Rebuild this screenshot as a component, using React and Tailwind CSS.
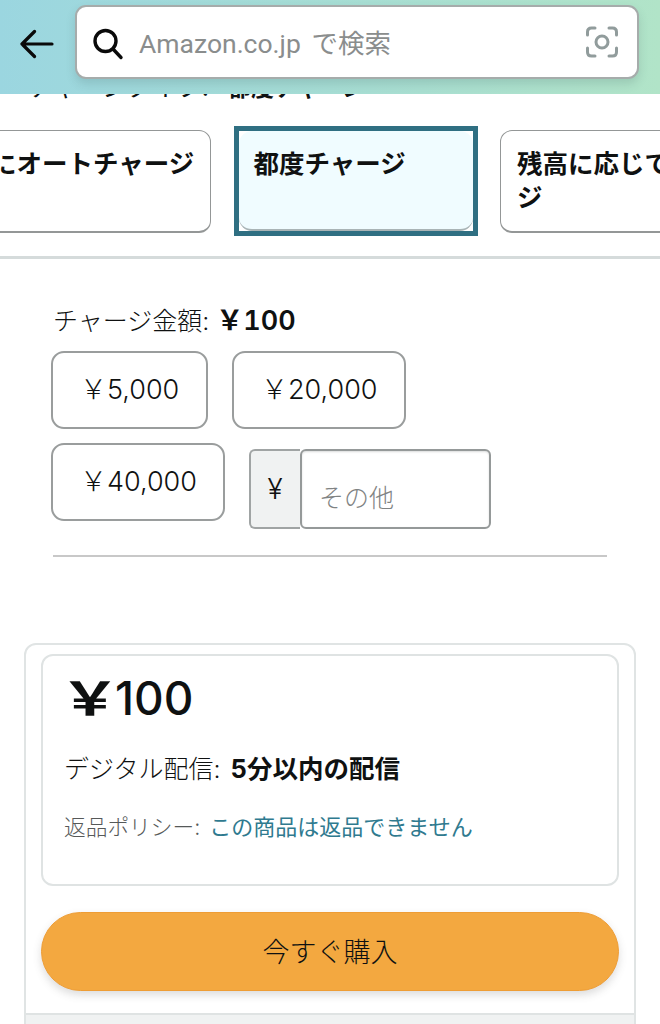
const Y = "\uFFE5";
export default function App() {
  return (
    <div className="relative h-[1024px] w-[660px] overflow-hidden bg-white text-[#0f1111] font-['Inter','Noto_Sans_CJK_JP',sans-serif]">
      <header className="relative z-10 flex h-[94px] items-start bg-gradient-to-r from-[#9bd6e0] to-[#b1e4c8] pl-[20px] pt-[5px]">
        <div className="flex h-[74px] w-[35px] items-center pt-[4px]">
          <svg width="34" height="30" viewBox="0 0 34 30" fill="none" stroke="#0a0a0a" strokeWidth="3.2" strokeLinecap="round" strokeLinejoin="round">
            <path d="M2 15H32M14.5 2.5L2 15L14.5 27.5" />
          </svg>
        </div>
        <div className="ml-[20px] flex h-[74px] w-[564px] items-center rounded-[11px] border-2 border-[#a6acab] bg-white pl-[15px] pr-[19px] shadow-[0_5px_10px_rgba(60,90,90,0.18)]">
          <svg className="mt-[3px]" width="32" height="32" viewBox="0 0 32 32" fill="none" stroke="#0a0a0a" strokeWidth="3.4" strokeLinecap="round">
            <circle cx="13.5" cy="13" r="10.5" />
            <path d="M21 21L29 29.5" />
          </svg>
          <span className="ml-[15px] flex-1 pt-[4px] font-['Roboto','Noto_Sans_CJK_JP',sans-serif] text-[26.5px] leading-none text-[#8a8d8d]">
            Amazon.co.jp <span className="ml-[4px]">で検索</span>
          </span>
          <svg width="32" height="32" viewBox="0 0 32 32" fill="none" stroke="#919c9c" strokeWidth="3" strokeLinecap="round">
            <path d="M1.5 9V6Q1.5 2 5.5 2H9M23 2H26.5Q30.5 2 30.5 6V9M1.5 22V26Q1.5 30 5.5 30H9M23 30H26.5Q30.5 30 30.5 26V22" />
            <circle cx="16" cy="16" r="6" />
          </svg>
        </div>
      </header>

      <div className="h-[6px] overflow-hidden pl-[28px]">
        <div className="-mt-[18px] whitespace-nowrap text-[25px] leading-[23px]">
          チャージタイプ: <span className="ml-[12px] text-[23px] font-bold">都度チャージ</span>
        </div>
      </div>

      <div className="mt-[26px] flex h-[110px] w-[660px] items-center gap-[22.5px] overflow-hidden pl-0">
        <div className="-ml-[25px] h-[103px] w-[235.5px] shrink-0 rounded-[12px] border-[1.5px] border-b-[2.5px] border-[#949797] bg-white pl-[15px] pt-[16px] text-[25.5px] font-bold leading-[34px] whitespace-nowrap">
          にオートチャージ
        </div>
        <div className="ml-[0.5px] h-[110px] w-[244px] shrink-0 border-[5px] border-[#2f6f82] bg-white">
          <div className="h-full rounded-[13px] border-b-[2px] border-[#a9b4b6] bg-[#f0fcff] pl-[15px] pt-[16px] text-[25.5px] font-bold leading-[34px]">
            都度チャージ
          </div>
        </div>
        <div className="h-[103px] w-[235px] shrink-0 rounded-[12px] border-[1.5px] border-b-[2.5px] border-[#949797] bg-white pl-[16px] pt-[16px] text-[25.5px] font-bold leading-[34px] whitespace-nowrap">
          残高に応じてオートチャー
          <br />
          ジ
        </div>
      </div>

      <div className="mt-[20px] h-[3px] bg-[#d5dbdb]" />

      <div className="pl-[51px] pt-[45px]">
        <div className="pl-[2px] text-[25px] leading-[34px]">
          <span className="font-light">チャージ金額:</span>{" "}
          <span className="text-[27px] font-semibold tabular-nums">{Y}100</span>
        </div>
        <div className="mt-[13px] flex gap-[24px]">
          <div className="flex h-[78px] w-[157px] items-center rounded-[13px] border-2 border-[#9a9d9d] pl-[27px] text-[27px] font-light">{Y}5,000</div>
          <div className="flex h-[78px] w-[174px] items-center rounded-[13px] border-2 border-[#9a9d9d] pl-[27px] text-[27px] font-light">{Y}20,000</div>
        </div>
        <div className="mt-[14px] flex items-start gap-[24px]">
          <div className="flex h-[78px] w-[174px] items-center rounded-[13px] border-2 border-[#9a9d9d] pl-[27px] text-[27px] font-light">{Y}40,000</div>
          <div className="mt-[6px] flex h-[80px]">
            <div className="flex w-[51px] items-center justify-center rounded-l-[6px] border-2 border-r-0 border-[#a0a4a4] bg-[#f0f2f2] pr-[1px] text-[28px] font-light">¥</div>
            <div className="flex w-[191px] items-center rounded-[6px] border-2 border-[#959999] bg-white pl-[17px] pt-[20px] text-[25px] font-light text-[#7f8383] shadow-[inset_0_1px_2px_rgba(15,17,17,0.15)]">その他</div>
          </div>
        </div>
      </div>

      <div className="ml-[53px] mt-[26px] h-[1.5px] w-[554px] bg-[#c8c8c8]" />

      <div className="ml-[24px] mt-[86px] h-[500px] w-[612px] rounded-[12px] border-2 border-[#e0e4e4] bg-white px-[15px] pt-[9px]">
        <div className="h-[232px] rounded-[12px] border-2 border-[#dfe3e3] pl-[24px] pr-[10px] pt-[16px]">
          <div className="text-[46px] font-medium leading-[52px]">
            <span className="mr-[2px] inline-block scale-x-[1.3] font-bold">{Y}</span>100
          </div>
          <div className="-ml-[3px] mt-[28px] text-[25px] leading-[34px]">
            <span className="font-light">デジタル配信:</span>{" "}
            <span className="ml-[3px] text-[25.5px] font-bold">5分以内の配信</span>
          </div>
          <div className="-ml-[3px] mt-[26px] text-[21.7px] leading-[30px]">
            <span className="font-light text-[#565959]">返品ポリシー:</span>{" "}
            <span className="ml-[3px] text-[22px] text-[#2f7a8f]">この商品は返品できません</span>
          </div>
        </div>
        <div className="mt-[26px] flex h-[79px] items-center justify-center rounded-full border border-[#ee9d35] bg-[#f3a840] pt-[4px] text-[27px] font-light shadow-[0_4px_8px_rgba(80,80,80,0.2)]">
          今すぐ購入
        </div>
        <div className="-mx-[15px] mt-[22px] h-[60px] border-t-2 border-[#dfe3e3] bg-[#f0f2f2]" />
      </div>
    </div>
  );
}
